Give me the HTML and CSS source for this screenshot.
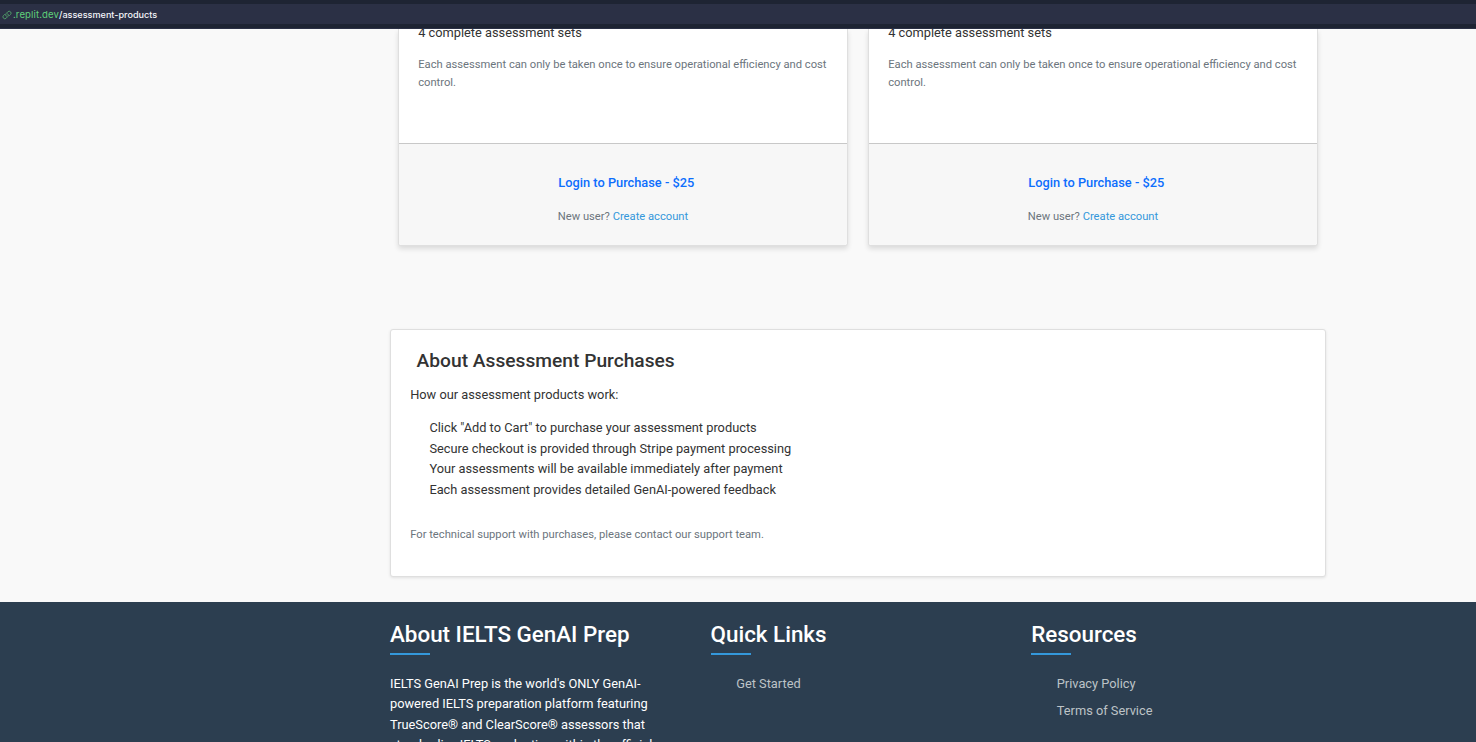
FILE: index.html
```html
<!DOCTYPE html>
<html lang="en">
<head>
<meta charset="utf-8">
<title>Assessment Products</title>
<link rel="stylesheet" href="styles.css">
</head>
<body>
<div class="address-bar">
  <div class="address-field">
    <svg class="link-icon" viewBox="0 0 10 10" width="10" height="10" fill="none" stroke="currentColor" stroke-width="1" stroke-linecap="round"><path d="M4.2 6.2a1.9 1.9 0 0 1 0-2.7l1.6-1.7a1.9 1.9 0 0 1 2.7 2.7l-1 1"/><path d="M5.8 3.8a1.9 1.9 0 0 1 0 2.7l-1.6 1.7a1.9 1.9 0 0 1-2.7-2.7l1-1"/></svg>
    <span class="host">.replit.dev</span><span class="path">/assessment-products</span>
  </div>
</div>
<main class="page">
  <div class="products">
    <article class="card">
      <div class="card-body">
        <p class="sets">4 complete assessment sets</p>
        <p class="small muted">Each assessment can only be taken once to ensure operational efficiency and cost control.</p>
      </div>
      <div class="card-footer">
        <a class="login">Login to Purchase - $25</a>
        <p class="small muted">New user? <a class="create">Create account</a></p>
      </div>
    </article>
    <article class="card">
      <div class="card-body">
        <p class="sets">4 complete assessment sets</p>
        <p class="small muted">Each assessment can only be taken once to ensure operational efficiency and cost control.</p>
      </div>
      <div class="card-footer">
        <a class="login">Login to Purchase - $25</a>
        <p class="small muted">New user? <a class="create">Create account</a></p>
      </div>
    </article>
  </div>
  <section class="about">
    <h2>About Assessment Purchases</h2>
    <p class="lead">How our assessment products work:</p>
    <ul class="steps">
      <li>Click "Add to Cart" to purchase your assessment products</li>
      <li>Secure checkout is provided through Stripe payment processing</li>
      <li>Your assessments will be available immediately after payment</li>
      <li>Each assessment provides detailed GenAI-powered feedback</li>
    </ul>
    <p class="small muted">For technical support with purchases, please contact our support team.</p>
  </section>
</main>
<footer class="footer">
  <div class="column">
    <h3>About IELTS GenAI Prep</h3>
    <p class="blurb">IELTS GenAI Prep is the world's ONLY GenAI-<br>powered IELTS preparation platform featuring<br>TrueScore® and ClearScore® assessors that<br>standardize IELTS evaluation within the official</p>
  </div>
  <div class="column">
    <h3>Quick Links</h3>
    <ul class="links"><li>Get Started</li></ul>
  </div>
  <div class="column">
    <h3>Resources</h3>
    <ul class="links"><li>Privacy Policy</li><li>Terms of Service</li></ul>
  </div>
</footer>
</body>
</html>
```
FILE: styles.css
```css
* { box-sizing: border-box; }
body {
  margin: 0;
  height: 742px;
  overflow: hidden;
  display: flex;
  flex-direction: column;
  background: #f9f9f9;
  color: #333;
  font: 12.8px/20.48px Roboto, sans-serif;
}
h2, h3, p, ul { margin: 0; padding: 0; }
ul { list-style: none; }
.address-bar {
  flex: none;
  height: 29px;
  padding: 4px 0;
  background: #1e2433;
  border-bottom: 1px solid #2b3045;
}
.address-field {
  display: flex;
  align-items: center;
  height: 20px;
  padding: 1px 0 0 2px;
  background: #2b3045;
  font: 500 9.6px/19px Inter, sans-serif;
}
.link-icon { color: #4f9a68; margin-right: 1px; }
.host { color: #5fd07a; font-weight: 400; letter-spacing: 0.1px; }
.path { color: #f5f6fa; font-size: 9.1px; }
.page {
  flex: none;
  height: 573px;
  width: 936px;
  margin-left: 390px;
}
.products {
  display: grid;
  grid-template-columns: 450px 450px;
  gap: 20px;
  padding-left: 8px;
  height: 217px;
}
.card {
  display: flex;
  flex-direction: column;
  background: #fff;
  border: 1px solid #dfdfdf;
  border-top: 0;
  border-radius: 0 0 3px 3px;
  box-shadow: 0 3px 5px rgba(0, 0, 0, .12);
  overflow: hidden;
}
.card-body { height: 114px; padding: 0 18.8px 0 19.2px; }
.sets { margin: -6px 0 12.8px; }
.small { font-size: 11.2px; line-height: 17.92px; }
.muted { color: #6c757d; }
.card-footer {
  flex: 1;
  padding: 29px 0 0;
  border-top: 1px solid #c8c8c8;
  background: #f7f7f7;
  text-align: center;
}
.login {
  display: block;
  margin: 0 0 15px 6.6px;
  color: #0d6efd;
  font-weight: 500;
}
.create { color: #3498db; }
.about {
  height: 248px;
  margin-top: 83px;
  padding: 19px 19.2px;
  background: #fff;
  border: 1px solid #dfdfdf;
  border-radius: 3px;
  box-shadow: 0 1px 3px rgba(0, 0, 0, .1);
}
.about h2 { margin: 0 0 13px 6.4px; font-size: 19.2px; line-height: 23px; font-weight: 500; }
.lead { margin-bottom: 12.8px; }
.steps { margin: 0 0 26px 19.2px; }
.footer {
  flex: 1;
  min-height: 0;
  overflow: hidden;
  display: grid;
  grid-template-columns: repeat(3, 295px);
  column-gap: 25.6px;
  padding: 19px 0 0 390px;
  background: #2c3e50;
  color: #fff;
}
.footer h3 { font-size: 22.4px; line-height: 27px; font-weight: 500; margin-bottom: 19px; }
.footer h3::after {
  content: "";
  display: block;
  width: 40px;
  height: 2px;
  margin-top: 5px;
  background: #3498db;
}
.blurb { white-space: nowrap; }
.links { padding-left: 25.6px; color: #bdc3c7; }
.links li { margin-bottom: 6.4px; }
```
